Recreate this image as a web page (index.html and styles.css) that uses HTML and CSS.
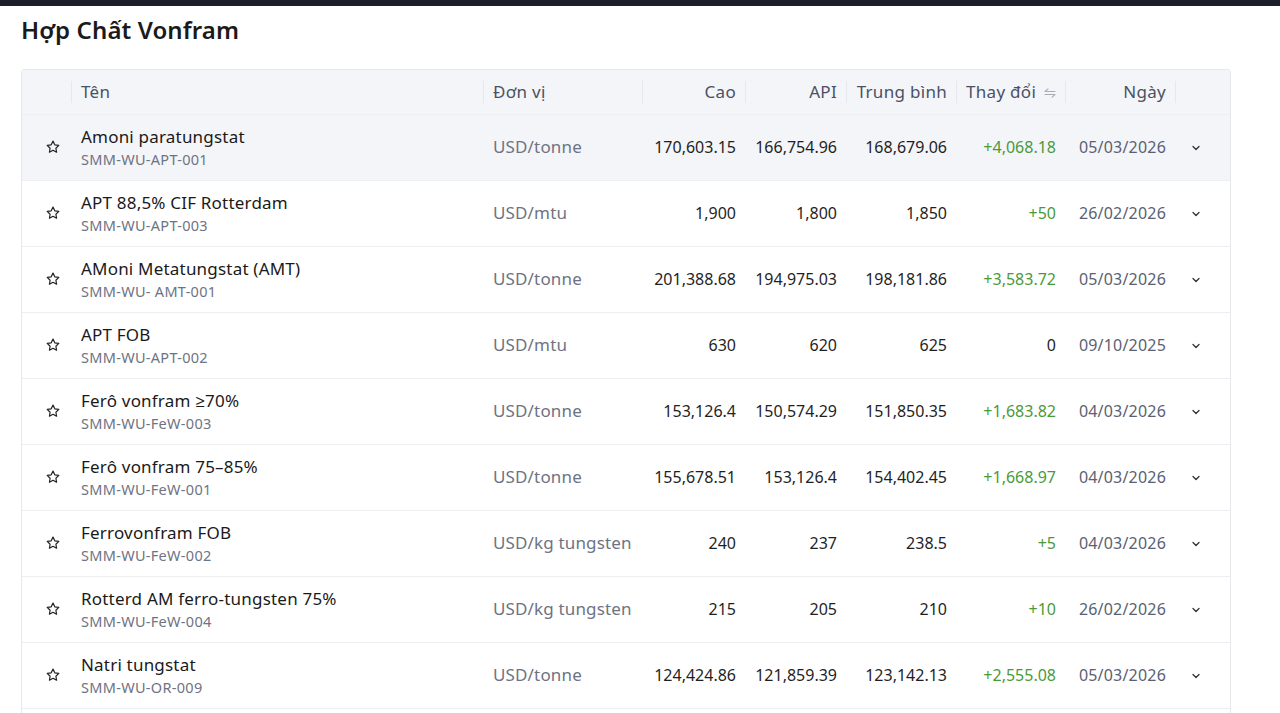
FILE: index.html
```html
<!DOCTYPE html>
<html lang="vi">
<head>
<meta charset="utf-8">
<title>Hợp Chất Vonfram</title>
<link rel="stylesheet" href="styles.css">
</head>
<body>
<div class="topbar"></div>
<main class="page">
  <h1 class="title">Hợp Chất Vonfram</h1>
  <div class="table-wrap">
    <table class="prices">
      <colgroup>
        <col class="c-star"><col class="c-name"><col class="c-unit"><col class="c-high"><col class="c-api"><col class="c-avg"><col class="c-chg"><col class="c-date"><col class="c-exp">
      </colgroup>
      <thead>
        <tr>
          <th></th>
          <th class="sep">Tên</th>
          <th class="sep">Đơn vị</th>
          <th class="sep num">Cao</th>
          <th class="sep num">API</th>
          <th class="sep num">Trung bình</th>
          <th class="sep">Thay đổi <svg class="sort" width="12" height="10" viewBox="0 0 12 10"><path d="M1 3.5H11M1 3.5L4 0.8M1 6.5H11M11 6.5L8 9.2" fill="none" stroke="currentColor" stroke-width="1.1" stroke-linecap="round"/></svg></th>
          <th class="sep num">Ngày</th>
          <th class="sep"></th>
        </tr>
      </thead>
      <tbody>
        <tr class="hover">
          <td class="star"><svg width="16" height="16" viewBox="0 0 24 24"><path d="M12 3.2l2.7 5.5 6 .9-4.35 4.25 1.03 6L12 17l-5.38 2.85 1.03-6L3.3 9.6l6-.9z" fill="none" stroke="currentColor" stroke-width="1.8" stroke-linejoin="round"/></svg></td>
          <td><div class="nm">Amoni paratungstat</div><div class="code">SMM-WU-APT-001</div></td>
          <td class="unit">USD/tonne</td>
          <td class="num">170,603.15</td><td class="num">166,754.96</td><td class="num">168,679.06</td>
          <td class="num up">+4,068.18</td><td class="num date">05/03/2026</td>
          <td class="exp"><svg width="10" height="10" viewBox="0 0 10 10"><path d="M2 3.5L5 6.5 8 3.5" fill="none" stroke="currentColor" stroke-width="1.3" stroke-linecap="round" stroke-linejoin="round"/></svg></td>
        </tr>
        <tr>
          <td class="star"><svg width="16" height="16" viewBox="0 0 24 24"><path d="M12 3.2l2.7 5.5 6 .9-4.35 4.25 1.03 6L12 17l-5.38 2.85 1.03-6L3.3 9.6l6-.9z" fill="none" stroke="currentColor" stroke-width="1.8" stroke-linejoin="round"/></svg></td>
          <td><div class="nm">APT 88,5% CIF Rotterdam</div><div class="code">SMM-WU-APT-003</div></td>
          <td class="unit">USD/mtu</td>
          <td class="num">1,900</td><td class="num">1,800</td><td class="num">1,850</td>
          <td class="num up">+50</td><td class="num date">26/02/2026</td>
          <td class="exp"><svg width="10" height="10" viewBox="0 0 10 10"><path d="M2 3.5L5 6.5 8 3.5" fill="none" stroke="currentColor" stroke-width="1.3" stroke-linecap="round" stroke-linejoin="round"/></svg></td>
        </tr>
        <tr>
          <td class="star"><svg width="16" height="16" viewBox="0 0 24 24"><path d="M12 3.2l2.7 5.5 6 .9-4.35 4.25 1.03 6L12 17l-5.38 2.85 1.03-6L3.3 9.6l6-.9z" fill="none" stroke="currentColor" stroke-width="1.8" stroke-linejoin="round"/></svg></td>
          <td><div class="nm">AMoni Metatungstat (AMT)</div><div class="code">SMM-WU- AMT-001</div></td>
          <td class="unit">USD/tonne</td>
          <td class="num">201,388.68</td><td class="num">194,975.03</td><td class="num">198,181.86</td>
          <td class="num up">+3,583.72</td><td class="num date">05/03/2026</td>
          <td class="exp"><svg width="10" height="10" viewBox="0 0 10 10"><path d="M2 3.5L5 6.5 8 3.5" fill="none" stroke="currentColor" stroke-width="1.3" stroke-linecap="round" stroke-linejoin="round"/></svg></td>
        </tr>
        <tr>
          <td class="star"><svg width="16" height="16" viewBox="0 0 24 24"><path d="M12 3.2l2.7 5.5 6 .9-4.35 4.25 1.03 6L12 17l-5.38 2.85 1.03-6L3.3 9.6l6-.9z" fill="none" stroke="currentColor" stroke-width="1.8" stroke-linejoin="round"/></svg></td>
          <td><div class="nm">APT FOB</div><div class="code">SMM-WU-APT-002</div></td>
          <td class="unit">USD/mtu</td>
          <td class="num">630</td><td class="num">620</td><td class="num">625</td>
          <td class="num flat">0</td><td class="num date">09/10/2025</td>
          <td class="exp"><svg width="10" height="10" viewBox="0 0 10 10"><path d="M2 3.5L5 6.5 8 3.5" fill="none" stroke="currentColor" stroke-width="1.3" stroke-linecap="round" stroke-linejoin="round"/></svg></td>
        </tr>
        <tr>
          <td class="star"><svg width="16" height="16" viewBox="0 0 24 24"><path d="M12 3.2l2.7 5.5 6 .9-4.35 4.25 1.03 6L12 17l-5.38 2.85 1.03-6L3.3 9.6l6-.9z" fill="none" stroke="currentColor" stroke-width="1.8" stroke-linejoin="round"/></svg></td>
          <td><div class="nm">Ferô vonfram ≥70%</div><div class="code">SMM-WU-FeW-003</div></td>
          <td class="unit">USD/tonne</td>
          <td class="num">153,126.4</td><td class="num">150,574.29</td><td class="num">151,850.35</td>
          <td class="num up">+1,683.82</td><td class="num date">04/03/2026</td>
          <td class="exp"><svg width="10" height="10" viewBox="0 0 10 10"><path d="M2 3.5L5 6.5 8 3.5" fill="none" stroke="currentColor" stroke-width="1.3" stroke-linecap="round" stroke-linejoin="round"/></svg></td>
        </tr>
        <tr>
          <td class="star"><svg width="16" height="16" viewBox="0 0 24 24"><path d="M12 3.2l2.7 5.5 6 .9-4.35 4.25 1.03 6L12 17l-5.38 2.85 1.03-6L3.3 9.6l6-.9z" fill="none" stroke="currentColor" stroke-width="1.8" stroke-linejoin="round"/></svg></td>
          <td><div class="nm">Ferô vonfram 75–85%</div><div class="code">SMM-WU-FeW-001</div></td>
          <td class="unit">USD/tonne</td>
          <td class="num">155,678.51</td><td class="num">153,126.4</td><td class="num">154,402.45</td>
          <td class="num up">+1,668.97</td><td class="num date">04/03/2026</td>
          <td class="exp"><svg width="10" height="10" viewBox="0 0 10 10"><path d="M2 3.5L5 6.5 8 3.5" fill="none" stroke="currentColor" stroke-width="1.3" stroke-linecap="round" stroke-linejoin="round"/></svg></td>
        </tr>
        <tr>
          <td class="star"><svg width="16" height="16" viewBox="0 0 24 24"><path d="M12 3.2l2.7 5.5 6 .9-4.35 4.25 1.03 6L12 17l-5.38 2.85 1.03-6L3.3 9.6l6-.9z" fill="none" stroke="currentColor" stroke-width="1.8" stroke-linejoin="round"/></svg></td>
          <td><div class="nm">Ferrovonfram FOB</div><div class="code">SMM-WU-FeW-002</div></td>
          <td class="unit">USD/kg tungsten</td>
          <td class="num">240</td><td class="num">237</td><td class="num">238.5</td>
          <td class="num up">+5</td><td class="num date">04/03/2026</td>
          <td class="exp"><svg width="10" height="10" viewBox="0 0 10 10"><path d="M2 3.5L5 6.5 8 3.5" fill="none" stroke="currentColor" stroke-width="1.3" stroke-linecap="round" stroke-linejoin="round"/></svg></td>
        </tr>
        <tr>
          <td class="star"><svg width="16" height="16" viewBox="0 0 24 24"><path d="M12 3.2l2.7 5.5 6 .9-4.35 4.25 1.03 6L12 17l-5.38 2.85 1.03-6L3.3 9.6l6-.9z" fill="none" stroke="currentColor" stroke-width="1.8" stroke-linejoin="round"/></svg></td>
          <td><div class="nm">Rotterd AM ferro-tungsten 75%</div><div class="code">SMM-WU-FeW-004</div></td>
          <td class="unit">USD/kg tungsten</td>
          <td class="num">215</td><td class="num">205</td><td class="num">210</td>
          <td class="num up">+10</td><td class="num date">26/02/2026</td>
          <td class="exp"><svg width="10" height="10" viewBox="0 0 10 10"><path d="M2 3.5L5 6.5 8 3.5" fill="none" stroke="currentColor" stroke-width="1.3" stroke-linecap="round" stroke-linejoin="round"/></svg></td>
        </tr>
        <tr>
          <td class="star"><svg width="16" height="16" viewBox="0 0 24 24"><path d="M12 3.2l2.7 5.5 6 .9-4.35 4.25 1.03 6L12 17l-5.38 2.85 1.03-6L3.3 9.6l6-.9z" fill="none" stroke="currentColor" stroke-width="1.8" stroke-linejoin="round"/></svg></td>
          <td><div class="nm">Natri tungstat</div><div class="code">SMM-WU-OR-009</div></td>
          <td class="unit">USD/tonne</td>
          <td class="num">124,424.86</td><td class="num">121,859.39</td><td class="num">123,142.13</td>
          <td class="num up">+2,555.08</td><td class="num date">05/03/2026</td>
          <td class="exp"><svg width="10" height="10" viewBox="0 0 10 10"><path d="M2 3.5L5 6.5 8 3.5" fill="none" stroke="currentColor" stroke-width="1.3" stroke-linecap="round" stroke-linejoin="round"/></svg></td>
        </tr>
        <tr>
          <td class="star"></td><td></td><td></td><td></td><td></td><td></td><td></td><td></td><td></td>
        </tr>
      </tbody>
    </table>
  </div>
</main>
</body>
</html>
```
FILE: styles.css
```css
* { box-sizing: border-box; }
html, body { margin: 0; padding: 0; background: #fff; }
body {
  font-family: "Noto Sans", "Open Sans", sans-serif;
  color: #1f1f1f;
  overflow: hidden;
  height: 713px;
}
.topbar { height: 6px; background: #1c1f29; }
.page { padding: 0 49px 0 21px; }
.title {
  margin: 0;
  padding-top: 8px;
  height: 63px;
  font-size: 24px;
  font-weight: 600;
  letter-spacing: 0.1px;
  line-height: 32px;
  color: #1a1a1a;
}
.table-wrap {
  border: 1px solid #e6e8ec;
  border-radius: 4px;
  border-bottom: none;
  overflow: hidden;
}
.prices {
  width: 100%;
  border-collapse: collapse;
  table-layout: fixed;
}
.c-star { width: 49px; }
.c-name { width: 412px; }
.c-unit { width: 159px; }
.c-high { width: 103px; }
.c-api { width: 101px; }
.c-avg { width: 110px; }
.c-chg { width: 109px; }
.c-date { width: 110px; }
.c-exp { width: 55px; }
thead th {
  background: #f4f5f9;
  height: 44px;
  font-weight: 400;
  font-size: 17px;
  letter-spacing: 0.3px;
  color: #4b5163;
  text-align: left;
  padding: 0 10px;
  border-bottom: 1px solid #eceef2;
  position: relative;
  white-space: nowrap;
}
thead th.sep::before {
  content: "";
  position: absolute;
  left: 0;
  top: 11px;
  height: 22px;
  width: 1px;
  background: #e6e8ee;
}
thead th.num { text-align: right; padding-right: 9px; }
.sort { color: #a9adb8; margin-left: 3px; vertical-align: 0; }
tbody td {
  height: 66px;
  padding: 0 10px;
  border-bottom: 1px solid #eceef2;
  font-size: 16px;
  vertical-align: middle;
  white-space: nowrap;
}
tbody tr.hover td { background: #f4f5f9; }
td.star { text-align: center; padding: 4px 0 0 13px; color: #222; }
.nm { font-size: 17px; letter-spacing: 0.2px; line-height: 22px; color: #1a1a1a; margin-top: 1px; }
.code { font-size: 14.5px; letter-spacing: 0.3px; line-height: 22px; color: #6e7383; }
td.unit { color: #6e7383; font-size: 17px; letter-spacing: 0.15px; padding-bottom: 2px; }
td.num { text-align: right; padding-right: 9px; color: #1f1f1f; }
td.up { color: #4b9a38; }
td.flat { color: #1f1f1f; }
td.date { color: #5b6172; letter-spacing: 0.2px; }
td.exp { color: #333; padding: 0 0 0 16px; }
```
